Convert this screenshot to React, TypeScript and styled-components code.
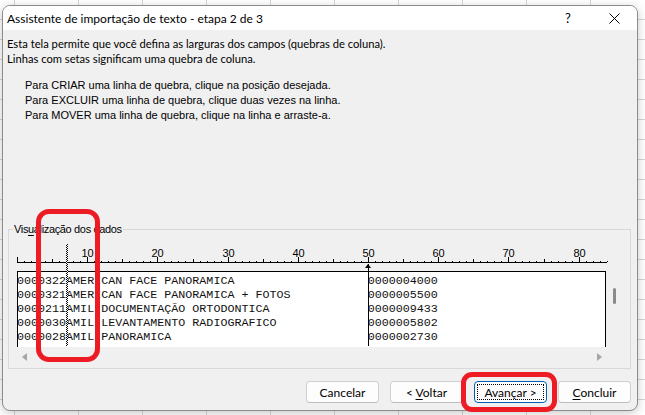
import React from 'react';
import styled, { createGlobalStyle } from 'styled-components';

const CHAR_W = 7.02;
const COLS = 84;

const GlobalStyle = createGlobalStyle`
  html, body { margin: 0; padding: 0; }
  body {
    width: 645px;
    height: 415px;
    overflow: hidden;
    background-color: #ffffff;
    background-image:
      linear-gradient(to right, #d6d6d6 1px, transparent 1px),
      linear-gradient(to bottom, #d6d6d6 1px, transparent 1px);
    background-size: 64px 20px;
    background-position: 14px 0, 0 -1px;
  }
  #root { width: 645px; height: 415px; }
`;

const Page = styled.div`
  position: relative;
  box-sizing: border-box;
  width: 645px;
  height: 415px;
  padding: 5px 7px 4px 2px;
  display: flex;
`;

const Dialog = styled.div`
  flex: 1;
  display: flex;
  flex-direction: column;
  background: #f0f0f0;
  border: 1px solid #8c8c8c;
  border-radius: 8px;
  overflow: hidden;
  box-shadow: 0 2px 10px rgba(0, 0, 0, 0.22);
`;

const TitleBar = styled.div`
  height: 24px;
  display: flex;
  align-items: center;
  background: #ffffff;
  padding-left: 4px;
  font-family: Lato, 'Noto Sans', sans-serif;
  font-size: 12px;
  color: #000;
`;

const Title = styled.div`
  flex: 1;
`;

const TitleButton = styled.div`
  width: 46px;
  height: 24px;
  display: flex;
  align-items: center;
  justify-content: center;
  font-family: Lato, 'Noto Sans', sans-serif;
  font-size: 13px;
  color: #000;
`;

const Body = styled.div`
  flex: 1;
  display: flex;
  flex-direction: column;
  padding: 6px 6px 7px 4px;
`;

const Header = styled.div`
  font-family: Lato, 'Noto Sans', sans-serif;
  font-size: 11.2px;
  line-height: 15px;
  color: #000;
`;

const Instructions = styled.div`
  margin-top: 12px;
  margin-left: 18px;
  font-family: 'Liberation Sans', Arial, sans-serif;
  font-size: 11px;
  line-height: 15px;
  color: #000;
`;

const GroupBox = styled.fieldset`
  margin: auto 0 0 1px;
  padding: 0 8px 1px 8px;
  border: 1px solid #d9d9d9;
  min-width: 0;
`;

const Legend = styled.legend`
  margin-left: -4px;
  padding: 0 1px;
  font-family: 'Liberation Sans', Arial, sans-serif;
  font-size: 11px;
  letter-spacing: -0.35px;
  line-height: 13px;
  color: #000;
`;

const Mnemonic = styled.span`
  text-decoration: underline;
  text-underline-offset: 2px;
`;

const Preview = styled.div`
  position: relative;
  display: flex;
  flex-direction: column;
`;

const RulerRow = styled.div`
  height: 35px;
`;

const DataRow = styled.div`
  display: flex;
`;

const DataBox = styled.div`
  box-sizing: border-box;
  width: 590px;
  height: 76px;
  background: #ffffff;
  border: 1px solid #000;
  border-bottom: none;
  padding-top: 3px;
  overflow: hidden;
`;

const DataLine = styled.div`
  margin-left: -1px;
  white-space: pre;
  font-family: 'Liberation Mono', 'Courier New', monospace;
  font-size: 11.7px;
  line-height: 13.9px;
  color: #111;
`;

const VScroll = styled.div`
  position: relative;
  width: 16px;
`;

const VThumb = styled.div`
  margin: 17px 0 0 7px;
  width: 3px;
  height: 16px;
  border-radius: 2px;
  background: #8a8a8a;
`;

const HScroll = styled.div`
  height: 20px;
  width: 590px;
  display: flex;
  align-items: center;
  justify-content: space-between;
  padding: 0 5px;
  box-sizing: border-box;
`;

const Arrow = styled.div<{ $dir: 'left' | 'right' }>`
  width: 0;
  height: 0;
  border-top: 4px solid transparent;
  border-bottom: 4px solid transparent;
  ${(p) =>
    p.$dir === 'left'
      ? 'border-right: 5px solid #a6a6a6;'
      : 'border-left: 5px solid #a6a6a6;'}
`;

const DraggedBreak = styled.div`
  position: absolute;
  top: 8px;
  width: 2px;
  height: 102px;
  background: conic-gradient(#000 25%, #fff 0 50%, #000 0 75%, #fff 0) 0 0 / 2px 2px;
`;

const FixedBreak = styled.div`
  position: absolute;
  top: 28px;
  width: 1px;
  height: 82px;
  background: #000;
  &::before {
    content: '';
    position: absolute;
    top: 0;
    left: -3px;
    width: 0;
    height: 0;
    border-left: 3.5px solid transparent;
    border-right: 3.5px solid transparent;
    border-bottom: 4px solid #000;
  }
`;

const ButtonRow = styled.div`
  margin-top: 12px;
  display: flex;
  justify-content: flex-end;
  gap: 11px;
`;

const Button = styled.button<{ $primary?: boolean }>`
  position: relative;
  width: 73px;
  height: 22px;
  padding: 0;
  background: #fdfdfd;
  border: 1px solid ${(p) => (p.$primary ? '#005fb8' : '#d0d0d0')};
  border-bottom-color: ${(p) => (p.$primary ? '#005fb8' : '#bdbdbd')};
  border-radius: 4px;
  font-family: Lato, 'Noto Sans', sans-serif;
  font-size: 12px;
  color: #000;
  ${(p) =>
    p.$primary
      ? `&::after {
          content: '';
          position: absolute;
          inset: 2px;
          border: 1px dotted #000;
        }`
      : ''}
`;

const RedMark = styled.div<{ $x: number; $y: number; $w: number; $h: number; $r: number }>`
  position: absolute;
  left: ${(p) => p.$x}px;
  top: ${(p) => p.$y}px;
  width: ${(p) => p.$w}px;
  height: ${(p) => p.$h}px;
  box-sizing: border-box;
  border: 5px solid #ed1c24;
  border-radius: ${(p) => p.$r}px;
  pointer-events: none;
`;

const Ruler: React.FC = () => {
  const ticks = [];
  const labels = [];
  for (let i = 0; i <= COLS; i++) {
    const x = Math.round(i * CHAR_W) + 0.5;
    const h = i % 10 === 0 ? 5 : i % 5 === 0 ? 3 : 1;
    ticks.push(<line key={i} x1={x} x2={x} y1={26} y2={26 - h} stroke="#000" strokeWidth={1} />);
    if (i % 10 === 0 && i > 0) {
      labels.push(
        <text
          key={'l' + i}
          x={x}
          y={21}
          textAnchor="middle"
          fontFamily="'Liberation Sans', Arial, sans-serif"
          fontSize="11"
          fill="#000"
        >
          {i}
        </text>
      );
    }
  }
  return (
    <svg width={592} height={35} style={{ display: 'block' }}>
      <line x1={0} x2={590} y1={26.5} y2={26.5} stroke="#000" strokeWidth={1} />
      {ticks}
      {labels}
    </svg>
  );
};

const rows: [string, string][] = [
  ['0000322AMERICAN FACE PANORAMICA', '0000004000'],
  ['0000321AMERICAN FACE PANORAMICA + FOTOS', '0000005500'],
  ['0000211AMIL DOCUMENTAÇÃO ORTODONTICA', '0000009433'],
  ['0000030AMIL LEVANTAMENTO RADIOGRAFICO', '0000005802'],
  ['0000028AMIL PANORAMICA', '0000002730'],
];

const CloseIcon = () => (
  <svg width="11" height="11" viewBox="0 0 11 11">
    <path d="M0.5 0.5 L10.5 10.5 M10.5 0.5 L0.5 10.5" stroke="#000" strokeWidth="1" fill="none" />
  </svg>
);

export default function App() {
  return (
    <>
      <GlobalStyle />
      <Page>
        <Dialog>
          <TitleBar>
            <Title>Assistente de importação de texto - etapa 2 de 3</Title>
            <TitleButton>?</TitleButton>
            <TitleButton>
              <CloseIcon />
            </TitleButton>
          </TitleBar>
          <Body>
            <Header>
              <div>Esta tela permite que você defina as larguras dos campos (quebras de coluna).</div>
              <div>Linhas com setas significam uma quebra de coluna.</div>
            </Header>
            <Instructions>
              <div>Para CRIAR uma linha de quebra, clique na posição desejada.</div>
              <div>Para EXCLUIR uma linha de quebra, clique duas vezes na linha.</div>
              <div>Para MOVER uma linha de quebra, clique na linha e arraste-a.</div>
            </Instructions>
            <GroupBox>
              <Legend>
                Vis<Mnemonic>u</Mnemonic>alização dos dados
              </Legend>
              <Preview>
                <RulerRow>
                  <Ruler />
                </RulerRow>
                <DataRow>
                  <DataBox>
                    {rows.map(([a, b]) => (
                      <DataLine key={a}>{a.padEnd(50, ' ') + b}</DataLine>
                    ))}
                  </DataBox>
                  <VScroll>
                    <VThumb />
                  </VScroll>
                </DataRow>
                <HScroll>
                  <Arrow $dir="left" />
                  <Arrow $dir="right" />
                </HScroll>
                <DraggedBreak style={{ left: Math.round(7 * CHAR_W) }} />
                <FixedBreak style={{ left: Math.round(50 * CHAR_W) }} />
              </Preview>
            </GroupBox>
            <ButtonRow>
              <Button>Cancelar</Button>
              <Button>
                &lt; <Mnemonic>V</Mnemonic>oltar
              </Button>
              <Button $primary>
                Avan<Mnemonic>ç</Mnemonic>ar &gt;
              </Button>
              <Button>
                <Mnemonic>C</Mnemonic>oncluir
              </Button>
            </ButtonRow>
          </Body>
        </Dialog>
        <RedMark $x={36} $y={209} $w={64} $h={153} $r={13} />
        <RedMark $x={461} $y={372} $w={96} $h={40} $r={11} />
      </Page>
    </>
  );
}
